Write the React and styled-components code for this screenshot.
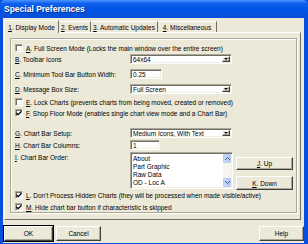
import React from "react";
import styled, { createGlobalStyle, css } from "styled-components";

const GlobalStyle = createGlobalStyle`
  html, body { margin: 0; padding: 0; background: #fff; }
  body {
    font-family: "Liberation Sans", Arial, sans-serif;
    font-size: 6.5px;
    color: #000;
  }
  * { box-sizing: border-box; }
`;

const raised = css`
  border: 1px solid;
  border-color: #fff #404040 #404040 #fff;
  box-shadow: inset -1px -1px 0 #aca899;
`;

const sunken = css`
  border: 1px solid;
  border-color: #aca899 #fff #fff #aca899;
  box-shadow: inset 1px 1px 0 #716f64, inset -1px -1px 0 #f1efe2;
`;

const Window = styled.div`
  width: 308px;
  height: 244px;
  background: #0a4ee0;
  display: flex;
  flex-direction: column;
  overflow: hidden;
`;

const TitleBar = styled.div`
  height: 18px;
  flex: none;
  display: flex;
  align-items: center;
  padding-left: 4px;
  color: #fff;
  font-weight: bold;
  font-size: 8.5px;
  border-radius: 5px 5px 0 0;
  background: linear-gradient(#4a94ff 0%, #0f5fec 20%, #0054e3 55%, #0a4fd8 100%);
  text-shadow: 1px 1px 0 #0a2a8a;
`;

const Body = styled.div`
  flex: 1;
  margin: 0 4px 1px 3px;
  background: #ece9d8;
  padding: 1px 0 0 1px;
  display: flex;
  flex-direction: column;
`;

const Tabs = styled.div`
  display: flex;
  height: 13px;
  align-items: flex-end;
`;

const Tab = styled.div`
  height: ${(p) => (p.$active ? 13 : 11)}px;
  width: ${(p) => p.$w}px;
  display: flex;
  align-items: center;
  justify-content: center;
  border-top: 1px solid #fff;
  border-left: ${(p) => (p.$active ? "1px solid #fff" : "none")};
  border-right: 1px solid #716f64;
  white-space: nowrap;
  margin-bottom: ${(p) => (p.$active ? -1 : 0)}px;
  background: #ece9d8;
  position: relative;
  z-index: ${(p) => (p.$active ? 1 : 0)};
`;

const Panel = styled.div`
  width: 297px;
  height: 188px;
  border: 1px solid;
  border-color: #fff #716f64 #716f64 #fff;
  padding: 5px 3px 0 5px;
`;

const Group = styled.div`
  width: 287px;
  height: 175px;
  border: 1px solid #aca899;
  box-shadow: inset 1px 1px 0 #fff, 1px 1px 0 #fff;
  padding: 0 0 0 4px;
  display: flex;
  flex-direction: column;
`;

const Row = styled.div`
  height: ${(p) => p.$h || 10}px;
  margin-top: ${(p) => p.$mt || 0}px;
  display: flex;
  align-items: ${(p) => (p.$top ? "flex-start" : "center")};
  white-space: nowrap;
`;

const Label = styled.div`
  width: 115px;
  flex: none;
  padding-top: ${(p) => p.$pt || 0}px;
`;

const Box = styled.span`
  width: 8px;
  height: 8px;
  flex: none;
  background: #fff;
  ${sunken};
  margin-right: 3px;
  display: flex;
  align-items: center;
  justify-content: center;
`;

const Input = styled.div`
  ${sunken};
  width: ${(p) => p.$w}px;
  height: ${(p) => p.$h || 10}px;
  background: #fff;
  padding: 0 2px;
  display: flex;
  align-items: center;
  position: relative;
`;

const Arrow = styled.div`
  position: absolute;
  right: 1px;
  top: 1px;
  bottom: 1px;
  width: 8px;
  background: #ece9d8;
  ${raised};
  display: flex;
  align-items: center;
  justify-content: center;
  &::after {
    content: "";
    border-left: 2px solid transparent;
    border-right: 2px solid transparent;
    border-top: 2px solid #000;
  }
`;

const ListBox = styled.div`
  ${sunken};
  width: 103px;
  height: 37px;
  background: #fff;
  display: flex;
  flex: none;
`;

const Items = styled.div`
  flex: 1;
  padding: 2px 0 0 2px;
  line-height: 8px;
`;

const ScrollBar = styled.div`
  width: 8px;
  margin: 1px 1px 1px 0;
  background: #f5f4ee;
  display: flex;
  flex-direction: column;
  justify-content: space-between;
`;

const ScrollBtn = styled.div`
  height: 9px;
  background: linear-gradient(90deg, #c8d8fb, #b4c9f5);
  border: 1px solid #b9cdf6;
  border-radius: 1px;
  display: flex;
  align-items: center;
  justify-content: center;
`;

const Side = styled.div`
  display: flex;
  flex-direction: column;
  gap: 6px;
  margin: 5px 0 0 3px;
`;

const Button = styled.div`
  ${raised};
  background: #ece9d8;
  width: ${(p) => p.$w}px;
  height: ${(p) => p.$h || 14}px;
  display: flex;
  align-items: center;
  justify-content: center;
  outline: ${(p) => (p.$def ? "1px solid #000" : "none")};
`;

const Footer = styled.div`
  display: flex;
  margin-top: 6px;
  gap: 3px;
`;

const Spacer = styled.div`
  flex: 1;
`;

const Check = ({ checked }) => (
  <Box>
    {checked && (
      <svg width="6" height="6" viewBox="0 0 7 7">
        <path d="M0.5 3.5 L2.5 5.5 L6.5 1.5" stroke="#000" strokeWidth="1.5" fill="none" />
      </svg>
    )}
  </Box>
);

const ScrollArrow = ({ up }) => (
  <svg width="5" height="3" viewBox="0 0 5 3">
    <path d={up ? "M0 3 L2.5 0.5 L5 3" : "M0 0 L2.5 2.5 L5 0"} stroke="#4d6185" strokeWidth="1" fill="none" />
  </svg>
);

const K = ({ k, children }) => (
  <span>
    <u>{k}</u>
    {children}
  </span>
);

export default function App() {
  return (
    <>
      <GlobalStyle />
      <Window>
        <TitleBar>Special Preferences</TitleBar>
        <Body>
          <Tabs>
            <Tab $active $w={55}><K k="1">. Display Mode</K></Tab>
            <Tab $w={32}><K k="2">. Events</K></Tab>
            <Tab $w={67}><K k="3">. Automatic Updates</K></Tab>
            <Tab $w={59}><K k="4">. Miscellaneous</K></Tab>
          </Tabs>
          <Panel>
            <Group>
              <Row $mt={4}>
                <Check />
                <K k="A">. Full Screen Mode (Locks the main window over the entire screen)</K>
              </Row>
              <Row $mt={1}>
                <Label><K k="B">. Toolbar Icons</K></Label>
                <Input $w={102}>64x64<Arrow /></Input>
              </Row>
              <Row $mt={5}>
                <Label><K k="C">. Minimum Tool Bar Button Width:</K></Label>
                <Input $w={32}>0.25</Input>
              </Row>
              <Row $mt={5}>
                <Label><K k="D">. Message Box Size:</K></Label>
                <Input $w={102}>Full Screen<Arrow /></Input>
              </Row>
              <Row $mt={3}>
                <Check />
                <K k="E">. Lock Charts (prevents charts from being moved, created or removed)</K>
              </Row>
              <Row $mt={1}>
                <Check checked />
                <K k="F">. Shop Floor Mode (enables single chart view mode and a Chart Bar)</K>
              </Row>
              <Row $mt={10}>
                <Label><K k="G">. Chart Bar Setup:</K></Label>
                <Input $w={102}>Medium Icons, With Text<Arrow /></Input>
              </Row>
              <Row $mt={2}>
                <Label><K k="H">. Chart Bar Columns:</K></Label>
                <Input $w={30}>1</Input>
              </Row>
              <Row $mt={2} $h={37} $top>
                <Label $pt={2}><K k="I">. Chart Bar Order:</K></Label>
                <ListBox>
                  <Items>
                    <div>About</div>
                    <div>Part Graphic</div>
                    <div>Raw Data</div>
                    <div>OD - Loc A</div>
                  </Items>
                  <ScrollBar>
                    <ScrollBtn><ScrollArrow up /></ScrollBtn>
                    <ScrollBtn><ScrollArrow /></ScrollBtn>
                  </ScrollBar>
                </ListBox>
                <Side>
                  <Button $w={57} $h={13}><K k="J">. Up</K></Button>
                  <Button $w={57} $h={14}><K k="K">. Down</K></Button>
                </Side>
              </Row>
              <Row $mt={1}>
                <Check checked />
                <K k="L">. Don't Process Hidden Charts (they will be processed when made visible/active)</K>
              </Row>
              <Row $mt={2}>
                <Check checked />
                <K k="M">. Hide chart bar button if characteristic is skipped</K>
              </Row>
            </Group>
          </Panel>
          <Footer>
            <Button $w={49} $h={15} $def>OK</Button>
            <Button $w={45} $h={15}>Cancel</Button>
            <Spacer />
            <Button $w={45} $h={15}>Help</Button>
          </Footer>
        </Body>
      </Window>
    </>
  );
}
